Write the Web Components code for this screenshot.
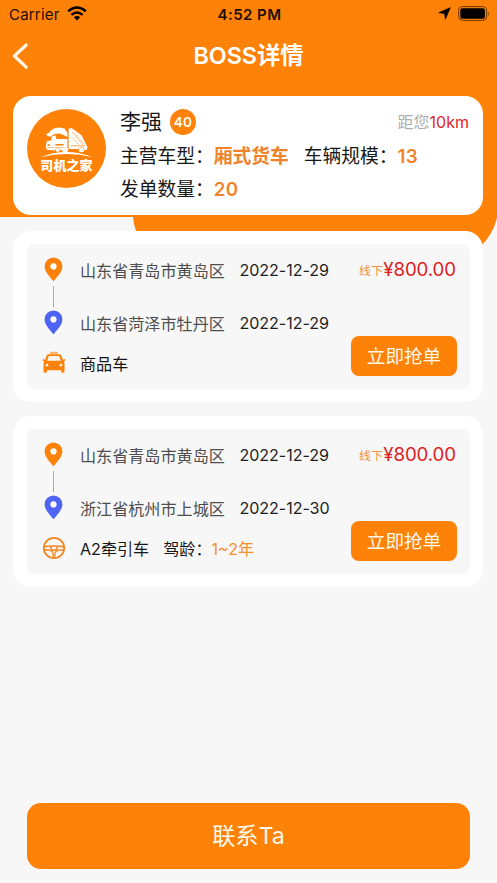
<!DOCTYPE html>
<html lang="zh-CN">
<head>
<meta charset="utf-8">
<meta name="viewport" content="width=device-width, initial-scale=1">
<title>BOSS详情</title>
<style>
html,body{margin:0;height:100%}
body{background:#f7f7f7;font-family:Inter,"Noto Sans CJK SC",sans-serif;color:#1c1c1c;overflow:hidden}
</style>
</head>
<body>
<boss-page></boss-page>
<script>
const define = (name, html) => {
  const t = document.createElement('template');
  t.innerHTML = html;
  customElements.define(name, class extends HTMLElement {
    constructor() {
      super();
      this.attachShadow({mode: 'open'}).append(t.content.cloneNode(true));
    }
  });
};

define('status-bar', `
<style>
:host{display:grid;grid-template-columns:1fr auto 1fr;align-items:center;height:28px;padding:0 7px 0 9px;box-sizing:border-box;font-size:15px;color:#1d0d00}
.l,.r{display:flex;align-items:center}
.l{gap:7px;letter-spacing:.2px}
.r{justify-content:flex-end;gap:7px}
b{font-weight:600;font-size:15px;letter-spacing:.45px}
svg{display:block}
.l svg{margin-top:-1px}
.r svg{margin-top:-1px}
</style>
<div class="l"><span>Carrier</span>
<svg width="20" height="15" viewBox="0 0 20 15"><g fill="none" stroke="#000" stroke-width="2.5"><path d="M1.2 5.3Q10-2.2 18.8 5.3"/><path d="M4.4 8.9Q10 4.2 15.6 8.9"/></g><path d="M6.8 11.2Q10 8.7 13.2 11.2L10 14.5Z"/></svg></div>
<b>4:52 PM</b>
<div class="r">
<svg width="13" height="13" viewBox="0 0 13 13"><path d="M12.2.7L7.4 12.2 6.6 6.5.8 5.7Z" stroke="#000" stroke-width=".7" stroke-linejoin="round"/></svg>
<svg width="32" height="15" viewBox="0 0 32 15"><rect x=".6" y=".6" width="28" height="13.8" rx="4" fill="none" stroke="#6b3500" stroke-width="1"/><rect x="2.3" y="2.3" width="24.6" height="10.4" rx="2"/><path d="M30.2 5q1.4 2.5 0 5Z" fill="#6b3500"/></svg>
</div>`);

define('nav-bar', `
<style>
:host{display:grid;grid-template-columns:40px 1fr 40px;align-items:center;height:55px;margin-bottom:2px;color:#fff}
svg{display:block;margin-left:11px}
h1{margin:0;text-align:center;font-size:23.3px;line-height:30px;font-weight:600;letter-spacing:-.05px}
</style>
<svg width="18" height="28" viewBox="0 0 18 28"><path d="M15.2 3L3.4 14 15.2 25.2" fill="none" stroke="#fff5e6" stroke-width="3.2" stroke-linecap="round" stroke-linejoin="round"/></svg>
<h1><slot></slot></h1>`);

define('driver-logo', `
<style>
:host{display:flex;flex-direction:column;align-items:center;width:79px;height:79px;border-radius:50%;background:#ff8208;color:#fff}
svg{display:block;margin-top:17px}
span{font-size:13px;line-height:14px;font-weight:900;letter-spacing:.1px;margin-top:-1px}
</style>
<svg width="53" height="33" viewBox="0 0 53 33">
<path fill="#fff" d="M6 8.300Q8.500 7.600 11 4.500 14 1.600 19.500 1.600L24.500 2.400 27.300 6.600V11L23 8.800Q16 5.600 10.500 10.800 7 10.500 6 8.300Z"/>
<path fill="#fff" d="M28.600 2.800L31.500 2 41.500 9.200 47.600 21.500 46.600 23.900H44.700A3.600 3.600 0 0 0 38.200 23H28.600Z"/>
<path fill="#fff" d="M12 10.200L15.600 9.600 16.400 13H27.400V24.200H21A3.800 3.800 0 0 0 14.500 24.400L7 23.800 5.800 21.600 6.600 15.300 11 14.400Z"/>
<g fill="none" stroke="#ff8208"><path d="M7.600 18.900H10M15.500 18.700H23.500" stroke-width="1.500"/><path d="M7 21.600H25" stroke-width=".5"/><path d="M31.800 6L42.500 18.500M31.800 11.500L39 18.800M34.200 6.600L44 18" stroke-width=".6" stroke-dasharray="2 .6"/><path d="M31 19.800H45" stroke-width=".7"/></g>
<g fill="#fff"><ellipse cx="25.200" cy="24" rx="3" ry="2.400"/><ellipse cx="41.500" cy="24" rx="2.700" ry="2.200"/><ellipse cx="17.700" cy="24.200" rx="2" ry="1.600"/></g>
<path fill="#fff" d="M.3 31.200Q26 20.900 52.700 31.200 27 24.800.3 31.200Z"/>
</svg>
<span>司机之家</span>`);

define('boss-card', `
<style>
:host{display:flex;height:119px;margin:0 14px 0 13px;padding:13px 14px 0;box-sizing:border-box;border-radius:18px;background:#fff;gap:14px}
.info{flex:1;font-size:18.75px;line-height:26px;color:#171717;white-space:nowrap}
.top{display:flex;align-items:center;height:26px;margin-bottom:5px}
.name{font-size:21px}
.age{display:grid;place-items:center;width:26px;height:26px;margin-left:8px;border-radius:50%;background:#ff8208;color:#fff;font-size:13.5px;font-weight:600;letter-spacing:.3px}
.dist{margin-left:auto;font-size:16px;color:#aeaeae}
.dist i{font-style:normal;color:#e0262b}
.row{display:flex;align-items:center;height:33px}
b{font-weight:600;color:#f0832a}
b+span{margin-left:15px}
.n{letter-spacing:.3px}
</style>
<driver-logo></driver-logo>
<div class="info">
<div class="top"><span class="name">李强</span><span class="age">40</span><span class="dist">距您<i>10km</i></span></div>
<div class="row"><span>主营车型：</span><b>厢式货车</b><span>车辆规模：</span><b class="n">13</b></div>
<div class="row"><span>发单数量：</span><b class="n">20</b></div>
</div>`);

define('pin-icon', `
<style>:host{display:block;width:19px;height:25px}svg{display:block}</style>
<svg width="19" height="25" viewBox="0 0 19 25"><path fill="currentColor" d="M9.5.5a8.9 8.9 0 0 0-8.9 8.9C.6 15 6.8 20.5 9.500 24.3 12.2 20.5 18.4 15 18.4 9.4A8.9 8.9 0 0 0 9.5.5Z"/><circle cx="9.5" cy="9.4" r="3.1" fill="#fff"/></svg>`);

define('taxi-icon', `
<style>:host{display:block}svg{display:block}</style>
<svg width="24" height="23" viewBox="0 0 24 23"><rect x="8" y=".8" width="8" height="2.5" rx=".7" fill="#ffb469"/><path fill="#ff8208" fill-rule="evenodd" d="M6.5 3.3h11q1.4 0 1.9 1.2l1.5 4.3 2-.8.6 1.6-1.8.8q.8.7.8 2v8.1q0 1.2-1.1 1.2h-1.2q-1.1 0-1.1-1.2v-1.3H4.9v1.3q0 1.2-1.1 1.2H2.6q-1.1 0-1.1-1.2v-8.1q0-1.3.8-2L.5 9.6 1.1 8l2 .8 1.5-4.3q.5-1.2 1.9-1.2ZM6.9 5 5.2 9.7h13.6L17.1 5ZM5 12.7a1.4 1.4 0 1 0 .01 0ZM19 12.7a1.4 1.4 0 1 0 .01 0Z"/></svg>`);

define('wheel-icon', `
<style>:host{display:block}svg{display:block}</style>
<svg width="24" height="24" viewBox="0 0 24 24" fill="none" stroke="#f5851f" stroke-width="1.8"><circle cx="12" cy="12" r="10.2"/><path d="M2.200 10.600Q12 9.400 21.800 10.600" stroke-width="1.600"/><path d="M2.400 14H6.300Q10.600 14.500 11.100 17.500V22M21.600 14H17.700Q13.400 14.500 12.900 17.500V22" stroke-width="1.300"/><path d="M8.600 10.500Q8.800 14.200 12 14.300 15.200 14.200 15.400 10.500" stroke-width="1.500"/></svg>`);

define('order-card', `
<style>
:host{display:block;height:171.5px;margin:0 14px 13.5px 13px;padding:13px 13px 13.5px 14px;box-sizing:border-box;border-radius:18px;background:#fff}
.in{display:grid;grid-template-columns:25px 173.5px 1fr auto;grid-template-rows:26px 27px 26px 14px 26px;height:145px;padding:13px 13px 0 14px;box-sizing:border-box;border-radius:7px;background:#f7f7f7;align-items:center;white-space:nowrap;font-size:16.1px}
.p{justify-self:center}
.a{padding-left:14px;color:#4e4e4e}
.d{letter-spacing:-.06px;color:#1f1f1f}
.price{display:flex;align-items:center;justify-self:end;margin-right:1px;color:#df1d23;font-size:18.7px;letter-spacing:-.1px}
.price small{font-size:11.8px;color:#f0913a;letter-spacing:.3px}
.line{grid-column:1;justify-self:center;width:1px;height:21px;background:#aaa;margin-top:1px}
.r3{grid-row:3}.r5{grid-row:5}
.a.r5{grid-column:2/4;color:#171717;display:flex}
button{grid-column:4;grid-row:4/6;align-self:start;justify-self:end;width:106px;height:40px;margin:0;padding:0;border:0;border-radius:8px;background:#ff8208;color:#fff8ed;font:18.6px/40px Inter,"Noto Sans CJK SC",sans-serif}
</style>
<div class="in">
<pin-icon class="p" style="color:#ff8208"></pin-icon><span class="a"><slot name="from"></slot></span><span class="d"><slot name="start"></slot></span><span class="price"><small>线下</small>¥800.00</span>
<div class="line"></div>
<pin-icon class="p r3" style="color:#4d64f5"></pin-icon><span class="a r3"><slot name="to"></slot></span><span class="d r3"><slot name="end"></slot></span>
<span class="p r5"><slot name="icon"></slot></span><span class="a r5"><slot name="car"></slot></span>
<button>立即抢单</button>
</div>`);

define('contact-button', `
<style>
:host{display:block;margin:auto 27px 14px}
button{display:block;width:100%;height:66px;border:0;padding:0;border-radius:14px;background:#ff8208;color:#fff8ed;font:23.2px/66px Inter,"Noto Sans CJK SC",sans-serif}
</style><button><slot></slot></button>`);

define('boss-page', `
<style>
:host{display:flex;flex-direction:column;height:883px;max-width:497px;box-sizing:border-box}
header{height:217px;background:#ff8208;margin-bottom:13.5px;position:relative;flex:none}
.swoosh{position:absolute;left:133px;top:216px;display:block}
boss-card{position:relative;margin-top:13px}
order-card{position:relative;flex:none}
.age{margin-left:14px}
.y{color:#f5902f}
</style>
<header>
<svg class="swoosh" width="364" height="30" viewBox="0 0 364 30"><path fill="#ff8208" d="M0 0H364V2Q360 18 348 30H10Q1 14 0 1Z"/></svg>
<status-bar></status-bar>
<nav-bar>BOSS详情</nav-bar>
<boss-card></boss-card>
</header>
<order-card><span slot="from">山东省青岛市黄岛区</span><span slot="start">2022-12-29</span><span slot="to">山东省菏泽市牡丹区</span><span slot="end">2022-12-29</span><taxi-icon slot="icon"></taxi-icon><span slot="car">商品车</span></order-card>
<order-card><span slot="from">山东省青岛市黄岛区</span><span slot="start">2022-12-29</span><span slot="to">浙江省杭州市上城区</span><span slot="end">2022-12-30</span><wheel-icon slot="icon"></wheel-icon><span slot="car">A2牵引车<span class="age">驾龄：</span><span class="y">1~2年</span></span></order-card>
<contact-button>联系Ta</contact-button>`);
</script>
</body>
</html>
